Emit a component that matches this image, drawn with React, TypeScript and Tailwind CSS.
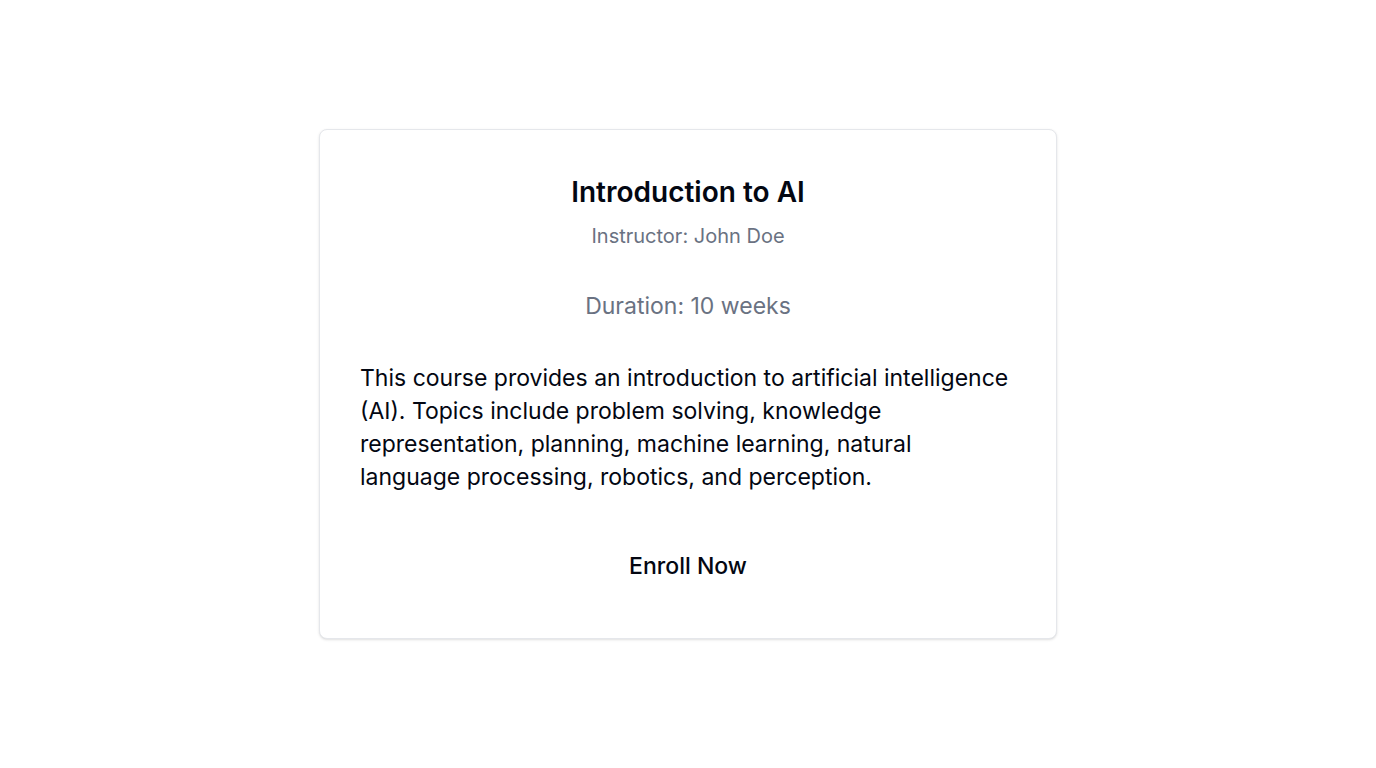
export default function App() {
  return (
    <div className="min-h-screen flex items-center justify-center bg-white" style={{ fontFamily: "Inter, 'Noto Sans', sans-serif" }}>
      <div className="w-[738px] h-[510px] rounded-lg border border-gray-200 bg-white shadow-sm px-10 pt-[46px] flex flex-col items-center">
        <h1 className="text-[28px] font-semibold text-gray-950 leading-8">Introduction to AI</h1>
        <p className="mt-[14px] text-[20px] leading-7 text-gray-500">Instructor: John Doe</p>
        <p className="mt-[42px] text-[23px] leading-7 text-gray-500">Duration: 10 weeks</p>
        <p className="mt-[42px] self-stretch text-[23px] leading-[33px] text-gray-950">
          This course provides an introduction to artificial intelligence (AI). Topics include problem solving, knowledge representation, planning, machine learning, natural language processing, robotics, and perception.
        </p>
        <button className="mt-[52px] px-4 py-[6px] text-[23px] leading-7 font-medium text-gray-950">Enroll Now</button>
      </div>
    </div>
  );
}
